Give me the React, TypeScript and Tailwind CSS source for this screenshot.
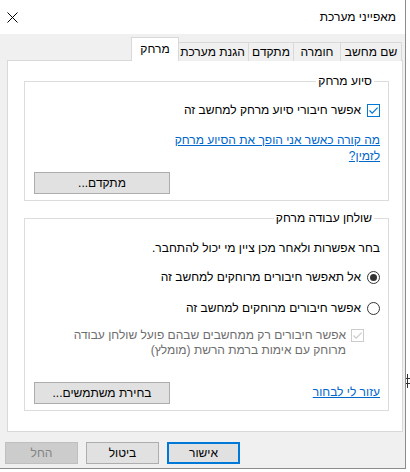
const font = { fontFamily: '"Liberation Sans", Arial, sans-serif' };

function CloseIcon() {
  return (
    <svg width="11" height="11" viewBox="0 0 11 11" className="block">
      <path d="M0.5 0.5 L10.5 10.5 M10.5 0.5 L0.5 10.5" stroke="#000" strokeWidth="1" fill="none" />
    </svg>
  );
}

function CheckBox({ disabled = false }: { disabled?: boolean }) {
  const c = disabled ? '#cccccc' : '#0078d7';
  return (
    <span
      className={`w-[13px] h-[13px] shrink-0 border bg-white flex items-center justify-center ${
        disabled ? 'border-[#cccccc]' : 'border-[#0078d7]'
      }`}
    >
      <svg width="11" height="11" viewBox="0 0 11 11">
        <path d="M1.5 5.5 L4.2 8.2 L9.6 2.6" stroke={c} strokeWidth="1.2" fill="none" />
      </svg>
    </span>
  );
}

function Radio({ checked = false }: { checked?: boolean }) {
  return (
    <span className="w-[13px] h-[13px] shrink-0 rounded-full border border-[#333] bg-white flex items-center justify-center">
      {checked && <span className="w-[7px] h-[7px] rounded-full bg-[#333]" />}
    </span>
  );
}

const tabs = [
  { label: 'שם מחשב', w: 'w-[62px]' },
  { label: 'חומרה', w: 'w-[48px]' },
  { label: 'מתקדם', w: 'w-[46px]' },
  { label: 'הגנת מערכת', w: 'w-[73px]' },
];

export default function App() {
  return (
    <div className="w-[410px] h-[472px] bg-white relative overflow-hidden text-[12px] text-black" style={font}>
      <div dir="rtl" className="w-[406px] h-[469px] bg-[#f0f0f0] border-r border-b border-[#8c8c8c] flex flex-col">
        {/* title bar */}
        <div className="h-[34px] bg-white flex items-center justify-between pr-[9px] pl-[7px] shrink-0">
          <span className="leading-[16px]">מאפייני מערכת</span>
          <CloseIcon />
        </div>

        {/* tabs */}
        <div className="flex items-end h-[24px] mt-[3px] pr-[3px] -mb-px relative z-10">
          {tabs.map((t) => (
            <div
              key={t.label}
              className={`${t.w} h-[19px] -ml-px border border-b-0 border-[#d9d9d9] bg-[#f0f0f0] flex items-center justify-center leading-[16px]`}
            >
              {t.label}
            </div>
          ))}
          <div className="w-[48px] h-[24px] -mr-[2px] border border-b-0 border-[#d9d9d9] bg-white flex items-start justify-center pt-[3px] leading-[16px]">
            מרחק
          </div>
        </div>

        {/* panel */}
        <div className="ml-[7px] mr-[2px] h-[372px] border border-[#d9d9d9] bg-white flex flex-col">
          <fieldset className="mt-[13px] ml-[16px] mr-[13px] border border-[#dcdcdc] pr-[8px] pl-[9px] pb-[6px] flex flex-col">
            <legend className="mr-[6px] px-[2px] leading-[14px]">סיוע מרחק</legend>
            <div className="flex items-center gap-[6px] mt-[15px] h-[14px]">
              <CheckBox />
              <span className="leading-[14px]">אפשר חיבורי סיוע מרחק למחשב זה</span>
            </div>
            <a className="mt-[15px] leading-[16px] text-[#0066cc] underline">
              מה קורה כאשר אני הופך את הסיוע מרחק
              <br />
              לזמין?
            </a>
            <button className="self-end mt-[8px] w-[136px] h-[22px] bg-[#e1e1e1] border border-[#adadad] leading-[16px]">
              מתקדם...
            </button>
          </fieldset>

          <fieldset className="mt-[10px] ml-[16px] mr-[13px] border border-[#dcdcdc] pr-[8px] pl-[9px] pb-[6px] flex flex-col">
            <legend className="mr-[6px] px-[2px] leading-[14px]">שולחן עבודה מרחק</legend>
            <div className="mt-[15px] leading-[16px]">בחר אפשרות ולאחר מכן ציין מי יכול להתחבר.</div>
            <div className="flex items-center gap-[6px] mt-[13px] h-[16px]">
              <Radio checked />
              <span className="leading-[16px]">אל תאפשר חיבורים מרוחקים למחשב זה</span>
            </div>
            <div className="flex items-center gap-[6px] mt-[15px] h-[16px]">
              <Radio />
              <span className="leading-[16px]">אפשר חיבורים מרוחקים למחשב זה</span>
            </div>
            <div className="flex items-start gap-[5px] mt-[12px] pr-[16px] text-[#6d6d6d]">
              <span className="mt-[1px]">
                <CheckBox disabled />
              </span>
              <span className="leading-[15px]">
                אפשר חיבורים רק ממחשבים שבהם פועל שולחן עבודה
                <br />
                מרוחק עם אימות ברמת הרשת (מומלץ)
              </span>
            </div>
            <div className="flex items-center justify-between mt-[24px]">
              <a className="leading-[16px] text-[#0066cc] underline mt-[-2px]">עזור לי לבחור</a>
              <button className="w-[136px] h-[22px] bg-[#e1e1e1] border border-[#adadad] leading-[16px]">
                בחירת משתמשים...
              </button>
            </div>
          </fieldset>
        </div>

        {/* dialog buttons */}
        <div className="flex justify-end gap-[8px] pl-[5px] mt-[10px]">
          <button className="w-[73px] h-[22px] bg-[#e1e1e1] border-2 border-[#0078d7] leading-[16px]">אישור</button>
          <button className="w-[73px] h-[22px] bg-[#e1e1e1] border border-[#adadad] leading-[16px]">ביטול</button>
          <button className="w-[73px] h-[22px] bg-[#cccccc] border border-[#bfbfbf] text-[#838383] leading-[16px]">
            החל
          </button>
        </div>
      </div>

      {/* window behind, peeking at the right edge */}
      <div className="absolute left-[407px] top-[374px] w-[1px] h-[14px] bg-[#333]" />
      <div className="absolute left-[406px] top-[378px] w-[4px] h-[1px] bg-[#333]" />
      <div className="absolute left-[406px] top-[383px] w-[4px] h-[1px] bg-[#333]" />
    </div>
  );
}
